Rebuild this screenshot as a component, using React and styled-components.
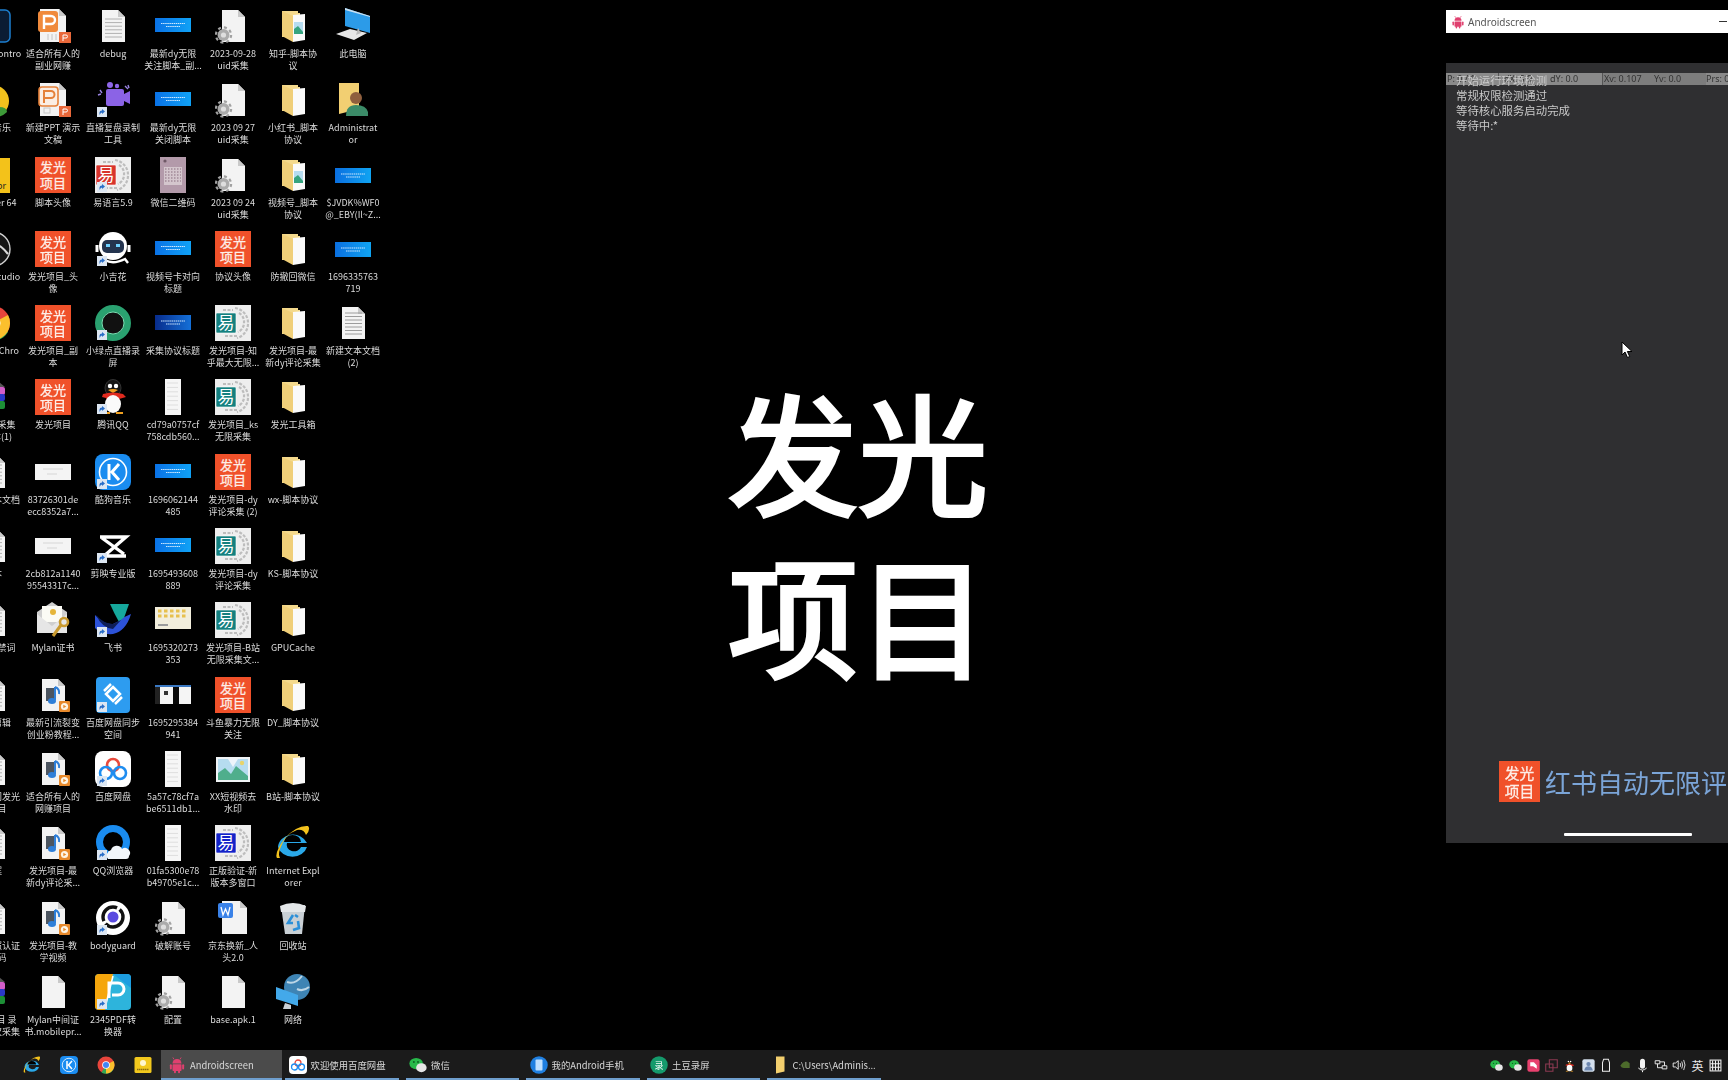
import React from 'react';
import styled, { createGlobalStyle } from 'styled-components';

const CJK = '"Noto Sans CJK SC", "Noto Sans", sans-serif';

const GlobalStyle = createGlobalStyle`
  html, body { margin: 0; padding: 0; background: #000; overflow: hidden; }
  body { font-family: ${CJK}; }
`;

const Screen = styled.div`
  width: 1728px;
  height: 1080px;
  display: flex;
  flex-direction: column;
  overflow: hidden;
  background: #000;
`;

const Desktop = styled.main`
  position: relative;
  flex: 1;
  overflow: hidden;
`;

const IconGrid = styled.div`
  display: grid;
  grid-auto-flow: column;
  grid-template-rows: repeat(14, 74.3px);
  grid-auto-columns: 60px;
  margin-left: -37px;
  padding-top: 8px;
  filter: blur(0.35px);
`;

const Cell = styled.div`
  display: flex;
  flex-direction: column;
  align-items: center;
`;

const IconBox = styled.div`
  position: relative;
  width: 36px;
  height: 36px;
  flex: none;
`;

const Label = styled.div`
  margin-top: 4px;
  width: 64px;
  font-size: 9px;
  line-height: 12px;
  color: #dcdcdc;
  text-align: center;
  white-space: nowrap;
`;

const LabelLine = styled.div`
  display: flex;
  justify-content: center;
`;

const IconSvg = styled.svg`
  display: block;
  flex: none;
`;

const BadgeSvg = styled.svg`
  position: absolute;
  left: 2px;
  bottom: 1px;
`;

const Tile = styled.div`
  width: ${p => p.$size}px;
  height: ${p => p.$size}px;
  flex: none;
  background: #f0512a;
  color: #fdeee8;
  font-size: ${p => p.$size * 0.36}px;
  line-height: ${p => p.$size * 0.42}px;
  font-weight: 400;
  -webkit-text-stroke: 0.3px #fdeee8;
  text-align: center;
  display: flex;
  flex-direction: column;
  justify-content: center;
`;

const BigTitle = styled.h1`
  position: absolute;
  left: 0;
  top: 367px;
  width: 1716px;
  margin: 0;
  text-align: center;
  color: #fff;
  font-family: ${CJK};
  font-size: 130px;
  line-height: 163px;
  font-weight: 400;
  -webkit-text-stroke: 4px #fff;
`;

const AndroidWindow = styled.section`
  position: absolute;
  left: 1446px;
  top: 10px;
  width: 364px;
  height: 833px;
  display: flex;
  flex-direction: column;
  background: #000;
`;

const TitleBar = styled.header`
  height: 23px;
  flex: none;
  background: #fff;
  display: flex;
  align-items: center;
  gap: 3px;
  padding-left: 5px;
  color: #555;
  font-size: 10px;
  font-family: "Noto Sans", sans-serif;
  filter: blur(0.3px);
`;

const WindowControls = styled.div`
  margin-left: auto;
  display: flex;
`;

const WindowControl = styled.div`
  width: 35px;
  height: 23px;
  display: flex;
  align-items: center;
  justify-content: center;
`;

const BlackStrip = styled.div`
  height: 30px;
  flex: none;
  background: #000;
`;

const PhoneScreen = styled.div`
  position: relative;
  flex: 1;
  background: #2f2f31;
  display: flex;
  flex-direction: column;
  padding: 10px 0 7px;
  box-sizing: border-box;
`;

const PointerBar = styled.div`
  position: absolute;
  top: 10px;
  left: 0;
  right: 0;
  height: 12px;
  display: grid;
  grid-template-columns: repeat(7, 1fr);
  background: #8a8a8a;
  color: #333;
  font-size: 9px;
  line-height: 12px;
  font-family: "Noto Sans", sans-serif;
  filter: blur(0.3px);
`;

const PointerCell = styled.span`
  padding-left: ${p => p.$inset}px;
  white-space: nowrap;
  overflow: hidden;
  border-left: ${p => (p.$rule ? '1px solid #555' : '0')};
  background: ${p => (p.$dim ? '#7d7d7d' : 'transparent')};
`;

const LogText = styled.div`
  position: relative;
  z-index: 1;
  padding-left: 10px;
  font-size: 11.4px;
  line-height: 14.9px;
  color: #c9c9c9;
  filter: blur(0.3px);
`;

const BrandRow = styled.div`
  margin-top: auto;
  padding-left: 53px;
  display: flex;
  align-items: center;
  gap: 5px;
  white-space: nowrap;
  overflow: hidden;
  filter: blur(0.3px);
`;

const BrandText = styled.span`
  font-size: 26px;
  line-height: 41px;
  color: #7ba5d8;
`;

const HomeIndicator = styled.div`
  width: 128px;
  height: 3px;
  margin: 31px auto 0;
  background: #fff;
  border-radius: 1px;
`;

const Cursor = styled.svg`
  position: absolute;
  left: 1621px;
  top: 341px;
`;

const Taskbar = styled.footer`
  height: 30px;
  flex: none;
  background: #1b1b1b;
  display: flex;
  align-items: stretch;
  padding-left: 13px;
`;

const PinButton = styled.div`
  width: 37px;
  display: flex;
  align-items: center;
  justify-content: center;
`;

const Task = styled.div`
  position: relative;
  width: 120.5px;
  flex: none;
  display: flex;
  align-items: center;
  gap: 4px;
  padding-left: 7px;
  box-sizing: border-box;
  color: #d8d8d8;
  font-size: 9.4px;
  white-space: nowrap;
  background: ${p => (p.$active ? '#4b4b4b' : 'transparent')};
  filter: blur(0.25px);

  &::after {
    content: '';
    position: absolute;
    left: ${p => (p.$active ? 0 : 3.5)}px;
    right: ${p => (p.$active ? 0 : 3.5)}px;
    bottom: 0;
    height: 2px;
    background: #6f9fce;
  }
`;

const Tray = styled.div`
  margin-left: auto;
  display: flex;
  align-items: center;
  padding-right: 3px;
`;

const TrayItem = styled.div`
  width: 18.25px;
  display: flex;
  align-items: center;
  justify-content: center;
  color: #e8e8e8;
  font-size: 12px;
`;

const Ico = ({ size = 36, children }) => (
  <IconSvg viewBox="0 0 36 36" width={size} height={size}>{children}</IconSvg>
);

const Shortcut = () => (
  <BadgeSvg viewBox="0 0 10 10" width="10" height="10">
    <rect width="10" height="10" fill="#dce6f2" />
    <path d="M2.5 8V5.5Q2.5 3.5 5 3.5V2L8 4.5 5 7V5.5Q3.5 5.5 2.5 8z" fill="#2b6fc8" />
  </BadgeSvg>
);

const Page = ({ fill = '#f3f3f3', x = 7, y = 2, w = 23, h = 32, children }) => (
  <>
    <path d={`M${x} ${y}h${w - 7}l7 7v${h - 7}h-${w}z`} fill={fill} />
    <path d={`M${x + w - 7} ${y}l7 7h-7z`} fill="#c9c9c9" />
    {children}
  </>
);

const Gear = ({ x = 8.5, y = 27 }) => (
  <g>
    <circle cx={x} cy={y} r="7.6" fill="none" stroke="#a2a2a2" strokeWidth="2.2" strokeDasharray="3 3" />
    <circle cx={x} cy={y} r="6" fill="#ababab" />
    <circle cx={x} cy={y} r="2.6" fill="#dedede" />
  </g>
);

const TextLines = ({ x, y, w, n = 6, step = 3.6, color = '#b0b0b0', width = 1, dash }) => (
  <>
    {Array.from({ length: n }).map((_, i) => (
      <path key={i} d={`M${x} ${y + i * step}h${w}`} stroke={color} strokeWidth={width} strokeDasharray={dash} />
    ))}
  </>
);

const FolderBase = ({ children }) => (
  <>
    <path d="M7 3h16v2h2v24H7z" fill="#f4d98c" />
    <path d="M18 7l12-1v26l-12 2z" fill="#fafafa" />
    <path d="M7 3l11 5v26L7 28z" fill="#f0cf79" />
    {children}
  </>
);

const Banner = ({ y = 10, h = 14, from = '#0a72e6', to = '#10a2f6' }) => (
  <>
    <defs>
      <linearGradient id={`b${from.slice(1)}`} x1="0" x2="1" y1="0" y2="0">
        <stop offset="0" stopColor={from} />
        <stop offset="1" stopColor={to} />
      </linearGradient>
    </defs>
    <rect y={y} width="36" height={h} fill={`url(#b${from.slice(1)})`} />
    <path d={`M6 ${y + h / 2 - 1.5}h24M11 ${y + h / 2 + 1.5}h14`} stroke="#cfe8ff" strokeWidth="1.2" strokeDasharray="1.5 .6" />
  </>
);

const YiYuyan = ({ color }) => (
  <>
    <rect width="36" height="36" fill="#eeeeee" />
    <path d="M20 3a15 15 0 0 1 13 15a15 15 0 0 1-11 15M24 8a10 10 0 0 1 5 10a10 10 0 0 1-6 9M8 5h10M10 31h12" fill="none" stroke="#bdbdbd" strokeWidth="2.2" strokeDasharray="3 1.5" />
    <rect x="1" y="8" width="20" height="20" fill={color} rx="1" stroke="#fff" strokeWidth=".6" />
    <text x="11" y="24" fontSize="17" fill="#fff" textAnchor="middle" fontFamily='"Noto Sans CJK SC", sans-serif'>易</text>
  </>
);

const VideoFile = () => (
  <Page x={7} y={2} w={23} h={32}>
    <rect x="11" y="11" width="8" height="13" fill="#4c5560" />
    <path d="M20 10v13" stroke="#2f7fd8" strokeWidth="2" />
    <ellipse cx="17" cy="24" rx="4" ry="3" fill="#2f7fd8" />
    <path d="M20 10q5 2 4 7" fill="none" stroke="#2f7fd8" strokeWidth="2" />
    <rect x="24" y="24" width="11" height="11" rx="1" fill="#e88a2c" />
    <circle cx="29.5" cy="29.5" r="3.6" fill="#fdf5e6" />
    <path d="M28.3 27.8l3 1.7-3 1.7z" fill="#e88a2c" />
  </Page>
);

const ICONS = {
  control: () => (
    <>
      <rect x="1" y="2" width="34" height="32" rx="5" fill="#0b1c33" stroke="#1d7fd0" strokeWidth="1.5" />
      <path d="M12 10l10 7-10 0zM24 26l-10-7 10 0z" fill="#2da0f0" />
    </>
  ),
  lemon: () => (
    <>
      <circle cx="18" cy="19" r="16" fill="#f2c21d" />
      <path d="M15 36q1-11 9-11t8 5q-6 6-17 6z" fill="#3d9a38" />
      <path d="M6 16q8-8 18-2" stroke="#d9a90e" strokeWidth="2" fill="none" />
    </>
  ),
  helper: () => (
    <>
      <rect x="6" y="1" width="29" height="35" fill="#f3c21a" />
      <circle cx="17" cy="14" r="7" fill="#fff7d8" />
      <text x="22" y="32" fontSize="9" fill="#222" fontFamily='"Noto Sans", sans-serif'>or</text>
    </>
  ),
  studio: () => (
    <>
      <circle cx="18" cy="18" r="17" fill="#151515" stroke="#d0d0d0" strokeWidth="1.4" />
      <path d="M5 17q14-12 28 6" fill="none" stroke="#d8d8d8" strokeWidth="2.2" />
    </>
  ),
  chrome: () => (
    <>
      <circle cx="18" cy="18" r="17" fill="#e8453c" />
      <path d="M18 18L33 27A17 17 0 0 1 9 33z" fill="#32a853" />
      <path d="M18 18L33 10A17 17 0 0 1 18 35z" fill="#fbc02d" />
      <circle cx="18" cy="18" r="7.6" fill="#fff" />
      <circle cx="18" cy="18" r="6" fill="#4285f4" />
    </>
  ),
  rar: () => (
    <>
      <rect x="7" y="8" width="23" height="8" rx="2" fill="#d35ec9" />
      <rect x="7" y="15" width="23" height="7" rx="2" fill="#2b38c8" />
      <rect x="7" y="22" width="23" height="8" rx="2" fill="#1d8f36" />
      <path d="M13 3h11l6 5H7z" fill="#555" />
    </>
  ),
  doc: () => (
    <Page>
      <TextLines x={10} y={11} w={17} n={6} step={3.6} />
    </Page>
  ),
  blank: () => <Page />,
  gear: () => (
    <>
      <Page />
      <Gear />
    </>
  ),
  ppt: () => (
    <>
      <Page x={5} y={1} w={26} h={33} />
      <rect x="3" y="3" width="20" height="21" rx="3" fill="#f08a3c" />
      <path d="M9 8h7a3 3 0 0 1 0 8h-7zM9 16v5" fill="none" stroke="#fff" strokeWidth="2.4" />
      <path d="M13 26v6M17 26v6M21 26v6" stroke="#c4c4c4" />
      <rect x="24" y="24" width="12" height="11" fill="#e9683a" />
      <path d="M28 33v-6h3a1.5 1.5 0 0 1 0 3h-3" fill="none" stroke="#fff" />
    </>
  ),
  pptOutline: () => (
    <>
      <Page x={5} y={1} w={26} h={33} />
      <rect x="4" y="5" width="19" height="19" rx="3" fill="#fbeee4" stroke="#e5813a" strokeWidth="1.6" />
      <path d="M9 9h7a3 3 0 0 1 0 7h-7zM9 16v5" fill="none" stroke="#e5813a" strokeWidth="2" />
      <rect x="9" y="26" width="6" height="5" fill="none" stroke="#c8c8c8" />
      <rect x="24" y="24" width="12" height="11" fill="#e9683a" />
      <path d="M28 33v-6h3a1.5 1.5 0 0 1 0 3h-3" fill="none" stroke="#fff" />
    </>
  ),
  camera: () => (
    <>
      <circle cx="15" cy="3" r="3" fill="#8f66e8" />
      <circle cx="22" cy="4" r="2.2" fill="#8f66e8" />
      <path d="M3 13l3-1M30 4l3 3M5 8l2 3M33 3l1 3" stroke="#9a84e4" strokeWidth="1.4" />
      <rect x="11" y="7" width="18" height="17" rx="2" fill="#8b63e6" />
      <path d="M29 12l6-3v13l-6-3z" fill="#8b63e6" />
    </>
  ),
  yi: () => <YiYuyan color="#d8342c" />,
  yiTeal: () => <YiYuyan color="#14807f" />,
  yiBlue: () => <YiYuyan color="#1322c8" />,
  qr: () => (
    <>
      <rect x="5" width="26" height="36" fill="#b39aaa" />
      <rect x="9" y="10" width="18" height="18" fill="#d4c6cd" />
      <path d="M10 12h16M10 15h16M10 18h16M10 21h16M10 24h16" stroke="#a18a98" strokeDasharray="1.5 1.5" strokeWidth="1.5" />
      <circle cx="10" cy="4" r="1.6" fill="#6e5866" />
    </>
  ),
  robot: () => (
    <>
      <circle cx="18" cy="15" r="14" fill="#fff" />
      <rect x="7" y="9" width="22" height="13" rx="5" fill="#24344f" />
      <rect x="11" y="13" width="4" height="3" fill="#6fd0ff" />
      <rect x="21" y="13" width="4" height="3" fill="#6fd0ff" />
      <path d="M2 14v7M34 14v7" stroke="#fff" strokeWidth="3" />
      <path d="M10 29q8 5 20-1l3 4" fill="none" stroke="#fff" strokeWidth="2.4" />
    </>
  ),
  greenRing: () => (
    <>
      <circle cx="18" cy="18" r="14.5" fill="none" stroke="#2aa170" strokeWidth="7" />
      <circle cx="18" cy="18" r="11" fill="#111" />
      <circle cx="18" cy="18" r="11" fill="none" stroke="#7be0b4" strokeWidth="1" />
    </>
  ),
  qq: () => (
    <>
      <ellipse cx="18" cy="9" rx="8" ry="8.5" fill="#141414" stroke="#333" />
      <circle cx="15" cy="7" r="2.2" fill="#fff" />
      <circle cx="21" cy="7" r="2.2" fill="#fff" />
      <path d="M13 11q5-2 10 0l-5 3z" fill="#f0a020" />
      <path d="M8 15q10-3 20 0l3 3-7 2v1H12l-1-2-4-1z" fill="#e02a1e" />
      <ellipse cx="18" cy="25" rx="8" ry="9" fill="#fafafa" />
      <path d="M8 34q5 0 7 0M21 34q5 0 7 0" stroke="#f0a020" strokeWidth="2" />
    </>
  ),
  kugou: () => (
    <>
      <rect width="36" height="36" rx="8" fill="#1a8cf0" />
      <circle cx="18" cy="18" r="13.5" fill="none" stroke="#fff" strokeWidth="1.6" />
      <path d="M14 10v16M24 10l-7 8 7 8" fill="none" stroke="#fff" strokeWidth="3" />
    </>
  ),
  capcut: () => (
    <>
      <path d="M5 9h26L9 28h22M7 10l22 16" fill="none" stroke="#fff" strokeWidth="3.4" />
    </>
  ),
  feishu: () => (
    <>
      <path d="M15 2h19l-5 14-5 4q-5-9-9-18z" fill="#16a89c" />
      <path d="M0 13q9 10 18 9l8-4q4-4 10-6-5 17-18 20-12 1-18-6z" fill="#2c52d8" />
      <path d="M1 13q8 9 17 9l8-4-8 9q-11-1-17-14z" fill="#0e1e58" />
    </>
  ),
  netdisk: () => (
    <>
      <rect x="1" width="34" height="36" rx="4" fill="#2d9cf0" />
      <path d="M18 10l7 7-7 7-7-7z" fill="none" stroke="#fff" strokeWidth="2.5" />
      <path d="M9 14l7-7M27 20l-7 7" stroke="#fff" strokeWidth="2.5" />
    </>
  ),
  baidu: () => (
    <>
      <rect width="36" height="36" rx="8" fill="#fff" />
      <circle cx="18" cy="14" r="6" fill="none" stroke="#e84a3c" strokeWidth="2.6" />
      <circle cx="11" cy="22" r="6" fill="none" stroke="#1f8df0" strokeWidth="2.6" />
      <circle cx="25" cy="22" r="6" fill="none" stroke="#1f8df0" strokeWidth="2.6" />
    </>
  ),
  qqBrowser: () => (
    <>
      <circle cx="18" cy="17" r="13.5" fill="none" stroke="#1a8cf0" strokeWidth="7" />
      <path d="M13 34a7 6 0 0 1 3-9 6 6 0 0 1 11-1 5 5 0 0 1 7 7q0 3-3 3z" fill="#f2f6fa" />
    </>
  ),
  bodyguard: () => (
    <>
      <circle cx="18" cy="18" r="17" fill="#fff" />
      <circle cx="18" cy="17" r="10" fill="none" stroke="#111" strokeWidth="3.4" strokeDasharray="24 3" />
      <circle cx="18" cy="17" r="5.5" fill="#5a4be0" />
    </>
  ),
  pdf2345: () => (
    <>
      <rect width="36" height="36" rx="4" fill="#2db4dc" />
      <path d="M0 4a4 4 0 0 1 4-4h14L10 36H4a4 4 0 0 1-4-4z" fill="#f5a60c" />
      <path d="M18 0h14a4 4 0 0 1 4 4v10z" fill="#1d9de0" />
      <path d="M14 24V9h9a6 6 0 0 1 0 12h-6" fill="none" stroke="#fff" strokeWidth="3" />
      <path d="M10 34L18 2" stroke="#fff" strokeWidth="1.6" />
    </>
  ),
  mail: () => (
    <>
      <path d="M2 10L17 0l15 10v18H2z" fill="#cfcfcf" />
      <rect x="7" y="4" width="20" height="16" fill="#fbfbf5" />
      <circle cx="18" cy="10" r="3" fill="#e5b53a" />
      <path d="M2 12l15 12 15-12v19H2z" fill="#e6e6e6" />
      <circle cx="29" cy="20" r="4" fill="none" stroke="#c99a30" strokeWidth="2.6" />
      <path d="M26 23l-8 11" stroke="#c99a30" strokeWidth="3" />
    </>
  ),
  thumbYellow: () => (
    <>
      <rect y="5" width="36" height="22" fill="#f2eedd" />
      <TextLines x={3} y={9} w={30} n={2} step={5} color="#e7c04e" width={3} dash="3.5 2.5" />
      <path d="M3 23h10" stroke="#9c9c9c" strokeWidth="2" />
    </>
  ),
  thumbShot: () => (
    <>
      <rect y="8" width="36" height="19" fill="#f5f5f5" />
      <rect y="8" width="5" height="19" fill="#222" />
      <rect x="18" y="8" width="6" height="19" fill="#0a0a0a" />
      <rect x="0" y="8" width="36" height="2" fill="#3a78c2" />
      <rect x="9" y="14" width="4" height="4" fill="#333" />
    </>
  ),
  whiteWide: () => (
    <>
      <rect y="10" width="36" height="16" fill="#f4f4f4" />
      <path d="M8 15h20M12 20h10" stroke="#d6d6d6" />
    </>
  ),
  narrow: () => (
    <>
      <rect x="10" width="16" height="36" fill="#f6f6f6" />
      <TextLines x={12} y={4} w={11} n={7} step={4.4} color="#dedede" />
    </>
  ),
  image: () => (
    <>
      <rect x="1" y="6" width="34" height="25" fill="#f1f4f6" />
      <rect x="3" y="8" width="30" height="21" fill="#b6dcf0" />
      <path d="M3 29V22l7-5 6 6 5-8 12 10v4z" fill="#4fae8c" />
      <circle cx="27" cy="12" r="2.2" fill="#e8d36a" />
      <path d="M13 8l5 8 5-8z" fill="#eef4fb" />
    </>
  ),
  word: () => (
    <>
      <Page x={7} y={1} w={25} h={33} />
      <rect x="3" y="3" width="15" height="15" rx="2" fill="#3a82e8" />
      <path d="M6 7l2 8 2.5-6 2.5 6 2-8" fill="none" stroke="#fff" strokeWidth="1.3" />
    </>
  ),
  ie: () => (
    <>
      <path d="M3 22a15 13 0 0 1 29-4H12a7 6 0 0 0 14 4h6A15 13 0 0 1 3 22z" fill="#2aa8e8" />
      <path d="M9 15h17a8.5 7 0 0 0-17 0z" fill="#000" transform="translate(0 2)" />
      <path d="M2 33Q-1 28 10 13 22 0 33 1q3 3-2 9-2-6-9-5Q10 9 5 24 3 30 5 33z" fill="#f3c21d" />
    </>
  ),
  recycle: () => (
    <>
      <path d="M6 6l24-1-3 29H10z" fill="#c9d0d5" />
      <path d="M5 6q13-6 26 0l-1 6H6z" fill="#e4e7e9" />
      <path d="M18 15l-5 8h5M18 30l6-2-1-7M23 17l-3-2" fill="none" stroke="#2b8fd8" strokeWidth="2.6" />
    </>
  ),
  network: () => (
    <>
      <circle cx="22" cy="13" r="13" fill="#3e84b4" />
      <path d="M12 8q8 3 15-6M22 15q6 3 12-2" stroke="#bcd6e6" strokeWidth="2" fill="none" />
      <path d="M1 13l22 8v11L1 25z" fill="#43a9ea" />
      <path d="M10 29l6 2v4H8z" fill="#c9d0d6" />
    </>
  ),
  computer: () => (
    <>
      <path d="M10 0l25 8v17L10 18z" fill="#2c9be8" />
      <path d="M10 0l25 8v1L10 2z" fill="#c9dff0" />
      <path d="M1 26l14-5 17 4-13 7z" fill="#e6e6e6" />
      <path d="M23 20l3 5-5 2z" fill="#bbb" />
    </>
  ),
  person: () => (
    <>
      <path d="M4 1h20v26l-20 5z" fill="#f2cf72" />
      <circle cx="21" cy="16" r="6" fill="#8f5f3e" />
      <path d="M11 34q0-11 10-11t12 7v4z" fill="#3b8b68" />
    </>
  ),
  folder: () => <FolderBase />,
  folderImage: () => (
    <FolderBase>
      <rect x="19" y="14" width="9" height="12" fill="#b6dcf0" />
      <path d="M19 26v-5l4-3 5 6v2z" fill="#36a47f" />
    </FolderBase>
  ),
  banner: () => <Banner />,
  bannerLow: () => <Banner y={11} h={15} from="#0a6fe0" to="#10a4f2" />,
  bannerDark: () => <Banner y={10} h={15} from="#082c8c" to="#1470d8" />,
  textDoc: () => (
    <Page>
      <TextLines x={10} y={8} w={17} n={7} step={3.5} color="#9c9c9c" />
    </Page>
  ),
  video: () => <VideoFile />,
};

const TileIcon = ({ size = 36 }) => (
  <Tile $size={size}>
    <div>发光</div>
    <div>项目</div>
  </Tile>
);

const COLUMNS = [
  [
    ['control', ['Screencontro', 'l']],
    ['lemon', ['咪咕音乐'], true],
    ['helper', ['Proxifier 64']],
    ['studio', ['Visual Studio']],
    ['chrome', ['Google Chro', 'me'], true],
    ['rar', ['视频号采集', '新版本(1)']],
    ['doc', ['新建文本文档']],
    ['doc', ['文本']],
    ['doc', ['直播违禁词']],
    ['doc', ['视频剪辑']],
    ['doc', ['新手入门发光', '光项目']],
    ['doc', ['文案']],
    ['doc', ['营业执照认证', '二维码']],
    ['rar', ['发光项目 录', '第一百次采集']],
  ],
  [
    ['ppt', ['适合所有人的', '副业网赚']],
    ['pptOutline', ['新建PPT 演示', '文稿']],
    ['tile', ['脚本头像']],
    ['tile', ['发光项目_头', '像']],
    ['tile', ['发光项目_副', '本']],
    ['tile', ['发光项目']],
    ['whiteWide', ['83726301de', 'ecc8352a7...']],
    ['whiteWide', ['2cb812a1140', '95543317c...']],
    ['mail', ['Mylan证书']],
    ['video', ['最新引流裂变', '创业粉教程...']],
    ['video', ['适合所有人的', '网赚项目']],
    ['video', ['发光项目-最', '新dy评论采...']],
    ['video', ['发光项目-教', '学视频']],
    ['blank', ['Mylan中间证', '书.mobilepr...']],
  ],
  [
    ['doc', ['debug']],
    ['camera', ['直播复盘录制', '工具'], true],
    ['yi', ['易语言5.9'], true],
    ['robot', ['小吉花'], true],
    ['greenRing', ['小绿点直播录', '屏'], true],
    ['qq', ['腾讯QQ'], true],
    ['kugou', ['酷狗音乐'], true],
    ['capcut', ['剪映专业版'], true],
    ['feishu', ['飞书'], true],
    ['netdisk', ['百度网盘同步', '空间'], true],
    ['baidu', ['百度网盘'], true],
    ['qqBrowser', ['QQ浏览器'], true],
    ['bodyguard', ['bodyguard'], true],
    ['pdf2345', ['2345PDF转', '换器'], true],
  ],
  [
    ['banner', ['最新dy无限', '关注脚本_副...']],
    ['banner', ['最新dy无限', '关闭脚本']],
    ['qr', ['微信二维码']],
    ['banner', ['视频号卡对向', '标题']],
    ['bannerDark', ['采集协议标题']],
    ['narrow', ['cd79a0757cf', '758cdb560...']],
    ['banner', ['1696062144', '485']],
    ['banner', ['1695493608', '889']],
    ['thumbYellow', ['1695320273', '353']],
    ['thumbShot', ['1695295384', '941']],
    ['narrow', ['5a57c78cf7a', 'be6511db1...']],
    ['narrow', ['01fa5300e78', 'b49705e1c...']],
    ['gear', ['破解账号']],
    ['gear', ['配置']],
  ],
  [
    ['gear', ['2023-09-28', 'uid采集']],
    ['gear', ['2023 09 27', 'uid采集']],
    ['gear', ['2023 09 24', 'uid采集']],
    ['tile', ['协议头像']],
    ['yiTeal', ['发光项目-知', '乎最大无限...']],
    ['yiTeal', ['发光项目_ks', '无限采集']],
    ['tile', ['发光项目-dy', '评论采集 (2)']],
    ['yiTeal', ['发光项目-dy', '评论采集']],
    ['yiTeal', ['发光项目-B站', '无限采集文...']],
    ['tile', ['斗鱼暴力无限', '关注']],
    ['image', ['XX短视频去', '水印']],
    ['yiBlue', ['正版验证-新', '版本多窗口']],
    ['word', ['京东换新_人', '头2.0']],
    ['blank', ['base.apk.1']],
  ],
  [
    ['folderImage', ['知乎-脚本协', '议']],
    ['folder', ['小红书_脚本', '协议']],
    ['folderImage', ['视频号_脚本', '协议']],
    ['folder', ['防撤回微信']],
    ['folder', ['发光项目-最', '新dy评论采集']],
    ['folder', ['发光工具箱']],
    ['folder', ['wx-脚本协议']],
    ['folder', ['KS-脚本协议']],
    ['folder', ['GPUCache']],
    ['folder', ['DY_脚本协议']],
    ['folder', ['B站-脚本协议']],
    ['ie', ['Internet Expl', 'orer']],
    ['recycle', ['回收站']],
    ['network', ['网络']],
  ],
  [
    ['computer', ['此电脑']],
    ['person', ['Administrat', 'or']],
    ['bannerLow', ['$JVDK%WF0', '@_EBY(Il~Z...']],
    ['bannerLow', ['1696335763', '719']],
    ['textDoc', ['新建文本文档', '(2)']],
  ],
];

const PINNED = ['ie', 'kugou', 'chrome', 'paper'];

const TASKS = [
  { icon: 'android', label: 'Androidscreen', active: true },
  { icon: 'baidu', label: '欢迎使用百度网盘' },
  { icon: 'wechat', label: '微信' },
  { icon: 'phone', label: '我的Android手机' },
  { icon: 'recorder', label: '土豆录屏' },
  { icon: 'folderSmall', label: 'C:\\Users\\Adminis...' },
];

const AndroidGlyph = ({ size = 18, color = '#e0406f' }) => (
  <IconSvg viewBox="0 0 24 24" width={size} height={size}>
    <path d="M6 10a6 6 0 0 1 12 0z" fill={color} />
    <path d="M8 4.5L6.5 2M16 4.5L17.5 2" stroke={color} strokeWidth="1.2" />
    <rect x="6" y="11" width="12" height="9" rx="1" fill={color} />
    <rect x="2.5" y="11" width="2.6" height="7" rx="1.3" fill={color} />
    <rect x="18.9" y="11" width="2.6" height="7" rx="1.3" fill={color} />
    <rect x="8" y="19" width="2.6" height="4" rx="1.3" fill={color} />
    <rect x="13.4" y="19" width="2.6" height="4" rx="1.3" fill={color} />
  </IconSvg>
);

const WeChatGlyph = ({ size = 18 }) => (
  <IconSvg viewBox="0 0 24 24" width={size} height={size}>
    <ellipse cx="9.5" cy="10" rx="9" ry="7.5" fill="#27b94a" />
    <ellipse cx="16.5" cy="15.5" rx="7" ry="6" fill="#e6e6e6" />
    <circle cx="6.5" cy="8" r="1.2" fill="#0c5a20" />
    <circle cx="12" cy="8" r="1.2" fill="#0c5a20" />
  </IconSvg>
);

const SMALL = {
  ie: () => <Ico size={18}>{ICONS.ie()}</Ico>,
  kugou: () => <Ico size={18}>{ICONS.kugou()}</Ico>,
  chrome: () => <Ico size={18}>{ICONS.chrome()}</Ico>,
  baidu: () => <Ico size={18}>{ICONS.baidu()}</Ico>,
  paper: () => (
    <Ico size={18}>
      <rect x="1" y="2" width="34" height="32" rx="3" fill="#f2c81d" />
      <circle cx="18" cy="14" r="6" fill="#fff7cf" />
      <path d="M6 27h24" stroke="#8a6d10" strokeWidth="3" strokeDasharray="3 1" />
    </Ico>
  ),
  android: () => <AndroidGlyph />,
  wechat: () => <WeChatGlyph />,
  phone: () => (
    <Ico size={18}>
      <circle cx="18" cy="18" r="17.5" fill="#1f7fe0" />
      <rect x="11" y="7" width="14" height="22" rx="2" fill="#bfe0ff" />
    </Ico>
  ),
  recorder: () => (
    <Ico size={18}>
      <circle cx="18" cy="18" r="17.5" fill="#159a6c" />
      <text x="18" y="25" fontSize="18" fill="#fff" textAnchor="middle" fontFamily='"Noto Sans CJK SC", sans-serif'>录</text>
    </Ico>
  ),
  folderSmall: () => (
    <Ico size={18}>
      <path d="M10 1h17v30l-17 4z" fill="#f3cf6e" />
    </Ico>
  ),
};

const TRAY = [
  <WeChatGlyph size={13} key="w1" />,
  <WeChatGlyph size={13} key="w2" />,
  <Ico size={13} key="pink">
    <rect x="1" y="1" width="34" height="34" rx="6" fill="#e8416e" />
    <path d="M9 9h10l8 8v10l-10-7H9z" fill="#fff" />
  </Ico>,
  <Ico size={13} key="overlap">
    <path d="M12 2h22v22H12zM2 14h20v20H2z" fill="none" stroke="#8c3a52" strokeWidth="3" />
  </Ico>,
  <Ico size={13} key="qq">{ICONS.qq()}</Ico>,
  <Ico size={13} key="bd">
    <rect x="1" y="1" width="34" height="34" rx="5" fill="#d4e0ee" />
    <circle cx="18" cy="14" r="6" fill="#6d87b0" />
    <path d="M6 32q2-12 12-12t12 12z" fill="#6d87b0" />
  </Ico>,
  <Ico size={14} key="usb">
    <path d="M9 12l3-9h12l3 9v22H9z" fill="none" stroke="#f0f0f0" strokeWidth="2.6" />
  </Ico>,
  <Ico size={12} key="nv">
    <path d="M4 20q8-13 20-13l8 6v14H14q-6 0-10-7z" fill="#4c6b2b" />
  </Ico>,
  <Ico size={15} key="mic">
    <rect x="12" y="2" width="12" height="24" rx="6" fill="#f4f4f4" />
    <path d="M8 24q10 10 20 0M18 30v4" stroke="#f4f4f4" strokeWidth="2.4" fill="none" />
  </Ico>,
  <Ico size={14} key="net">
    <path d="M3 7h12v8H3zM21 20h12v8H21zM9 15v10h12M27 20V10H15" fill="none" stroke="#f0f0f0" strokeWidth="2.4" />
  </Ico>,
  <Ico size={14} key="vol">
    <path d="M3 13h6l7-6v22l-7-6H3z" fill="none" stroke="#f0f0f0" strokeWidth="2.4" />
    <path d="M21 13q3 5 0 10M25 9q5 9 0 18M30 5q7 13 0 26" fill="none" stroke="#f0f0f0" strokeWidth="2.2" />
  </Ico>,
  <span key="ime">英</span>,
  <Ico size={13} key="kbd">
    <rect x="3" y="3" width="30" height="30" fill="none" stroke="#f0f0f0" strokeWidth="3" />
    <path d="M10 4v28M18 4v28M26 4v28M4 13h28M4 23h28" stroke="#f0f0f0" strokeWidth="3" />
  </Ico>,
];

const POINTER = [
  { text: 'P: 0 / 1', inset: 1 },
  { text: 'dX: 5.9', inset: 5, rule: true },
  { text: 'dY: 0.0', inset: 0 },
  { text: 'Xv: 0.107', inset: 1, rule: true, dim: true },
  { text: 'Yv: 0.0', inset: 0, dim: true },
  { text: 'Prs: 0.0', inset: 0 },
  { text: 'Size: 0.0', inset: 0 },
];

const LOG = ['开始运行环境检测', '常规权限检测通过', '等待核心服务启动完成', '等待中:*'];

function DesktopIcon({ icon, lines, shortcut }) {
  const Drawn = ICONS[icon];
  return (
    <Cell>
      <IconBox>
        {icon === 'tile' ? <TileIcon /> : <Ico><Drawn /></Ico>}
        {shortcut && <Shortcut />}
      </IconBox>
      <Label>
        {lines.map(line => <LabelLine key={line}>{line}</LabelLine>)}
      </Label>
    </Cell>
  );
}

export default function App() {
  return (
    <Screen>
      <GlobalStyle />
      <Desktop>
        <IconGrid>
          {COLUMNS.map((col, c) => col.map(([icon, lines, shortcut], r) => (
            <DesktopIcon key={`${c}-${r}`} icon={icon} lines={lines} shortcut={shortcut} />
          )))}
        </IconGrid>

        <BigTitle>发光<br />项目</BigTitle>

        <AndroidWindow>
          <TitleBar>
            <AndroidGlyph size={14} />
            Androidscreen
            <WindowControls>
              <WindowControl>
                <svg width="8" height="2"><rect width="8" height="1" fill="#333" /></svg>
              </WindowControl>
              <WindowControl />
              <WindowControl />
            </WindowControls>
          </TitleBar>
          <BlackStrip />
          <PhoneScreen>
            <PointerBar>
              {POINTER.map(cell => (
                <PointerCell key={cell.text} $inset={cell.inset} $rule={cell.rule} $dim={cell.dim}>{cell.text}</PointerCell>
              ))}
            </PointerBar>
            <LogText>
              {LOG.map(line => <div key={line}>{line}</div>)}
            </LogText>
            <BrandRow>
              <TileIcon size={41} />
              <BrandText>红书自动无限评论采集</BrandText>
            </BrandRow>
            <HomeIndicator />
          </PhoneScreen>
        </AndroidWindow>

        <Cursor width="14" height="18" viewBox="0 0 14 18">
          <path d="M1 1v13l3-3 2.5 5.5 2.2-1L6.4 10.5H11z" fill="#fff" stroke="#000" strokeWidth="1" />
        </Cursor>
      </Desktop>

      <Taskbar>
        {PINNED.map(name => {
          const Small = SMALL[name];
          return <PinButton key={name}><Small /></PinButton>;
        })}
        {TASKS.map(task => {
          const Small = SMALL[task.icon];
          return (
            <Task key={task.label} $active={task.active}>
              <Small />
              {task.label}
            </Task>
          );
        })}
        <Tray>
          {TRAY.map(item => <TrayItem key={item.key}>{item}</TrayItem>)}
        </Tray>
      </Taskbar>
    </Screen>
  );
}
